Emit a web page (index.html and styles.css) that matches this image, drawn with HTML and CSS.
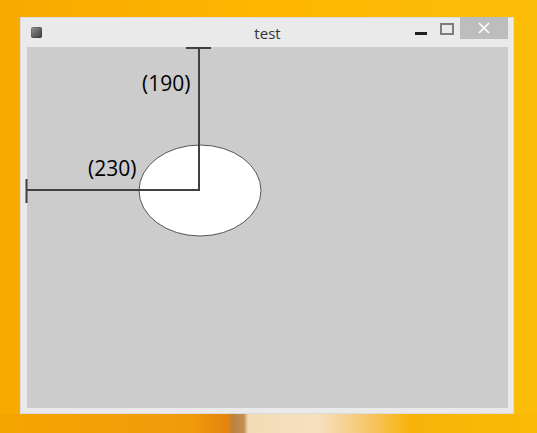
FILE: index.html
```html
<!DOCTYPE html>
<html>
<head>
<meta charset="utf-8">
<title>test</title>
<link rel="stylesheet" href="styles.css">
</head>
<body>
<div class="desktop">
  <div class="window">
    <div class="titlebar">
      <span class="app-icon"></span>
      <span class="title">test</span>
      <div class="controls">
        <span class="btn-min"><span class="min-bar"></span></span>
        <span class="btn-max"><span class="max-box"></span></span>
        <span class="btn-close">
          <svg width="12" height="12" viewBox="0 0 12 12"><path d="M1 1 L11 11 M11 1 L1 11" stroke="#fff" stroke-width="1.6" fill="none"/></svg>
        </span>
      </div>
    </div>
    <div class="canvas">
      <svg class="drawing" width="481" height="361" viewBox="0 0 481 361">
        <ellipse cx="173" cy="143.5" rx="61" ry="45.5" fill="#ffffff" stroke="#555555" stroke-width="1"/>
        <line x1="172" y1="0" x2="172" y2="144" stroke="#404040" stroke-width="2"/>
        <line x1="159" y1="1" x2="184" y2="1" stroke="#404040" stroke-width="2"/>
        <line x1="-1" y1="143" x2="173" y2="143" stroke="#404040" stroke-width="2"/>
        <line x1="-0.5" y1="132" x2="-0.5" y2="156" stroke="#404040" stroke-width="2"/>
        <text class="label" x="115" y="44">(190)</text>
        <text class="label" x="61" y="129">(230)</text>
      </svg>
    </div>
  </div>
</div>
</body>
</html>
```

FILE: styles.css
```css
html, body {
  margin: 0;
  padding: 0;
}
body {
  width: 537px;
  height: 433px;
  overflow: hidden;
}
.desktop {
  width: 537px;
  height: 433px;
  box-sizing: border-box;
  padding: 17px 0 0 20px;
  background:
    linear-gradient(to right, #f5a500 0px, #f19b0c 190px, #e3840f 228px, #b98240 233px, #c49152 244px, #f3dbb6 248px, #f6e1c0 318px, #f6c870 365px, #f7b30a 410px, #fbba04 537px) left bottom / 537px 19px no-repeat,
    linear-gradient(to right, #f7a900 0%, #feb700 50%, #fcbd08 100%);
}
.window {
  width: 494px;
  height: 397px;
  box-sizing: border-box;
  background: #eaeaea;
  border: 1px solid #dcdcdc;
  padding: 0 5px 5px 6px;
  display: flex;
  flex-direction: column;
}
.titlebar {
  height: 29px;
  display: flex;
  align-items: flex-start;
  position: relative;
}
.app-icon {
  width: 11px;
  height: 11px;
  margin: 9px 0 0 4px;
  border-radius: 2px;
  background: linear-gradient(135deg, #9a9a9a 0%, #6a6a6a 45%, #3a3a3a 100%);
  box-shadow: inset 0 0 0 1px rgba(0,0,0,0.15);
}
.title {
  position: absolute;
  left: 0;
  right: 0;
  top: 5px;
  text-align: center;
  font-family: "Open Sans", "Noto Sans", sans-serif;
  font-size: 15px;
  color: #333333;
}
.controls {
  margin-left: auto;
  display: flex;
  align-items: flex-start;
  position: relative;
  margin-top: -1px;
}
.btn-min {
  width: 26px;
  height: 22px;
  display: flex;
  justify-content: center;
}
.min-bar {
  width: 12px;
  height: 3px;
  background: #1e1e1e;
  margin-top: 15px;
}
.btn-max {
  width: 26px;
  height: 22px;
  display: flex;
  justify-content: center;
}
.max-box {
  width: 10px;
  height: 8px;
  border: 2px solid #7d7d7d;
  margin-top: 6px;
}
.btn-close {
  width: 48px;
  height: 22px;
  background: #bdbdbd;
  display: flex;
  align-items: center;
  justify-content: center;
}
.canvas {
  width: 481px;
  height: 361px;
  background: #cccccc;
}
.drawing {
  display: block;
  overflow: visible;
}
.label {
  font-family: "Open Sans", "Noto Sans", sans-serif;
  font-size: 21px;
  fill: #000000;
}
```
